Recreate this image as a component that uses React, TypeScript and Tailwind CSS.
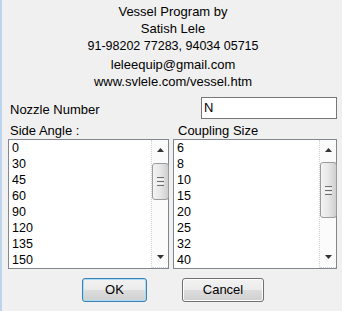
import React from "react";

const font = { fontFamily: '"Liberation Sans", Arial, sans-serif' };

function ScrollBar({ thumbTop, thumbHeight }: { thumbTop: number; thumbHeight: number }) {
  return (
    <div className="relative w-[17px] h-full bg-[#fbfbfb] border-l border-dotted border-[#d4d4d4] shrink-0">
      <svg className="absolute left-[5px] top-[8px]" width="7" height="4" viewBox="0 0 7 4">
        <polygon points="3.5,0 7,4 0,4" fill="#333333" />
      </svg>
      <div
        className="absolute left-[0px] w-[17px] rounded-[3px] border border-[#9b9b9b] bg-gradient-to-r from-[#f4f4f4] via-[#e6e6e6] to-[#cfcfcf] flex flex-col items-center justify-center gap-[1px]"
        style={{ top: thumbTop, height: thumbHeight }}
      >
        <div className="w-[7px] h-[1px] bg-[#707070]" />
        <div className="w-[7px] h-[1px] bg-[#f8f8f8]" />
        <div className="w-[7px] h-[1px] bg-[#707070]" />
        <div className="w-[7px] h-[1px] bg-[#f8f8f8]" />
        <div className="w-[7px] h-[1px] bg-[#707070]" />
      </div>
      <svg className="absolute left-[5px] bottom-[9px]" width="7" height="4" viewBox="0 0 7 4">
        <polygon points="0,0 7,0 3.5,4" fill="#333333" />
      </svg>
      <div className="absolute left-0 right-0 bottom-0 h-[3px] border-b border-dotted border-[#d4d4d4]" />
    </div>
  );
}

function ListBox({ items, width, thumbTop, thumbHeight }: { items: string[]; width: number; thumbTop: number; thumbHeight: number }) {
  return (
    <div className="h-[130px] border border-[#82878f] bg-white flex" style={{ width }}>
      <div className="flex-1 pl-[3px] overflow-hidden">
        {items.map((it) => (
          <div key={it} className="h-[16px] leading-[16px] text-[12.5px] text-black">
            {it}
          </div>
        ))}
      </div>
      <ScrollBar thumbTop={thumbTop} thumbHeight={thumbHeight} />
    </div>
  );
}

export default function App() {
  return (
    <div
      className="w-[342px] h-[311px] bg-[#f0f0f0] border-l-2 border-[#bcd4ee] overflow-hidden text-black flex flex-col"
      style={font}
    >
      <div className="pt-[2.5px] pl-[2px] text-center text-[13px] leading-[17.7px]">
        <div>Vessel Program by</div>
        <div>Satish Lele</div>
        <div className="text-[12.5px]">91-98202 77283, 94034 05715</div>
        <div>leleequip@gmail.com</div>
        <div>www.svlele.com/vessel.htm</div>
      </div>
      <div className="mt-[6px] flex items-center justify-between pl-[8px] pr-[5px]">
        <span className="text-[13px] leading-[15px] pt-[2px]">Nozzle Number</span>
        <div className="w-[136px] h-[22px] border border-[#777777] bg-white pl-[2px] text-[13px] leading-[20px]">
          N
        </div>
      </div>
      <div className="mt-[4px] flex pl-[6px]">
        <div className="flex flex-col">
          <span className="pl-[2px] text-[13px] leading-[15px] mb-[1px]">Side Angle :</span>
          <ListBox
            items={["0", "30", "45", "60", "90", "120", "135", "150"]}
            width={161}
            thumbTop={23}
            thumbHeight={37}
          />
        </div>
        <div className="flex flex-col ml-[4px]">
          <span className="pl-[5px] text-[13px] leading-[15px] mb-[1px]">Coupling Size</span>
          <ListBox
            items={["6", "8", "10", "15", "20", "25", "32", "40"]}
            width={164}
            thumbTop={22}
            thumbHeight={56}
          />
        </div>
      </div>
      <div className="mt-[9px] flex justify-center gap-[35px] pl-[2px]">
        <button className="w-[65px] h-[24px] rounded-[3px] border border-[#3c7fb1] shadow-[inset_0_0_0_1px_#a9dcf5] bg-[linear-gradient(#f2f2f2_0%,#ebebeb_50%,#dddddd_51%,#cfcfcf_100%)] text-[13px] leading-[20px]">
          OK
        </button>
        <button className="w-[82px] h-[24px] rounded-[3px] border border-[#707070] shadow-[inset_0_0_0_1px_#fcfcfc] bg-[linear-gradient(#f2f2f2_0%,#ebebeb_50%,#dddddd_51%,#cfcfcf_100%)] text-[13px] leading-[20px]">
          Cancel
        </button>
      </div>
    </div>
  );
}
